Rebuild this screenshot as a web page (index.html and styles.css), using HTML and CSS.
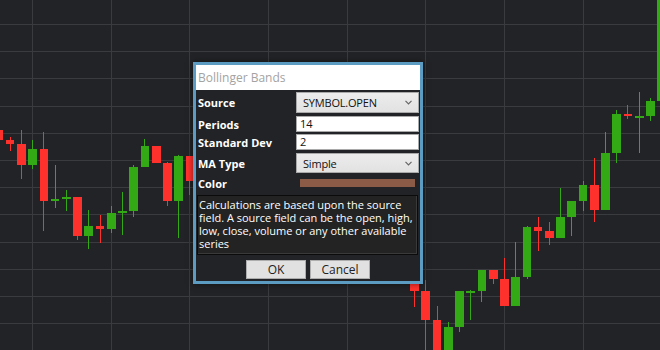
FILE: index.html
```html
<!DOCTYPE html>
<html lang="en">
<head>
    <meta charset="UTF-8">
    <meta name="viewport" content="width=device-width, initial-scale=1.0">
    <title>Bollinger Bands</title>
    <link rel="stylesheet" href="styles.css">
</head>
<body>
    <div class="chart">
        <svg class="chart-svg" width="660" height="350" viewBox="0 0 660 350">
            <g class="grid">
                <rect x="32" y="0" width="1" height="350"/>
                <rect x="111" y="0" width="1" height="350"/>
                <rect x="189" y="0" width="1" height="350"/>
                <rect x="268" y="0" width="1" height="350"/>
                <rect x="347" y="0" width="1" height="350"/>
                <rect x="425" y="0" width="1" height="350"/>
                <rect x="504" y="0" width="1" height="350"/>
                <rect x="583" y="0" width="1" height="350"/>
                <rect x="0" y="24" width="660" height="1"/>
                <rect x="0" y="51" width="660" height="1"/>
                <rect x="0" y="78" width="660" height="1"/>
                <rect x="0" y="106" width="660" height="1"/>
                <rect x="0" y="133" width="660" height="1"/>
                <rect x="0" y="160" width="660" height="1"/>
                <rect x="0" y="187" width="660" height="1"/>
                <rect x="0" y="214" width="660" height="1"/>
                <rect x="0" y="242" width="660" height="1"/>
                <rect x="0" y="269" width="660" height="1"/>
                <rect x="0" y="296" width="660" height="1"/>
                <rect x="0" y="323" width="660" height="1"/>
            </g>
            <!-- candles: wick first, body on top -->
            <g class="down">
                <rect x="-6" y="130" width="9" height="10"/>
                <rect x="10" y="137" width="1" height="14"/><rect x="6" y="140" width="8" height="4"/>
                <rect x="21" y="130" width="1" height="49"/><rect x="17" y="144" width="9" height="21"/>
                <rect x="43" y="132" width="1" height="99"/><rect x="40" y="149" width="8" height="52"/>
                <rect x="77" y="197" width="1" height="43"/><rect x="73" y="197" width="9" height="39"/>
                <rect x="100" y="215" width="1" height="28"/><rect x="96" y="226" width="8" height="3"/>
                <rect x="152" y="146" width="9" height="17"/>
                <rect x="167" y="162" width="1" height="44"/><rect x="163" y="163" width="9" height="38"/>
                <rect x="189" y="156" width="1" height="39"/><rect x="186" y="156" width="9" height="25"/>
                <rect x="414" y="270" width="1" height="37"/><rect x="410" y="270" width="9" height="21"/>
                <rect x="425" y="280" width="1" height="70"/><rect x="421" y="291" width="9" height="29"/>
                <rect x="437" y="306" width="1" height="44"/><rect x="433" y="320" width="8" height="30"/>
                <rect x="493" y="270" width="1" height="14"/><rect x="489" y="270" width="9" height="9"/>
                <rect x="504" y="258" width="1" height="48"/><rect x="500" y="279" width="9" height="27"/>
                <rect x="538" y="217" width="1" height="34"/><rect x="534" y="227" width="8" height="4"/>
                <rect x="549" y="222" width="1" height="23"/><rect x="545" y="231" width="9" height="7"/>
                <rect x="594" y="158" width="1" height="64"/><rect x="590" y="185" width="9" height="25"/>
                <rect x="627" y="105" width="1" height="14"/><rect x="624" y="114" width="8" height="2"/>
            </g>
            <g class="up">
                <rect x="32" y="140" width="1" height="29"/><rect x="28" y="149" width="9" height="16"/>
                <rect x="55" y="165" width="1" height="43"/><rect x="51" y="199" width="8" height="2"/>
                <rect x="66" y="190" width="1" height="21"/><rect x="62" y="197" width="9" height="2"/>
                <rect x="88" y="210" width="1" height="39"/><rect x="84" y="226" width="9" height="10"/>
                <rect x="111" y="206" width="1" height="27"/><rect x="107" y="213" width="9" height="16"/>
                <rect x="122" y="192" width="1" height="43"/><rect x="118" y="211" width="9" height="2"/>
                <rect x="133" y="165" width="1" height="52"/><rect x="129" y="167" width="9" height="44"/>
                <rect x="144" y="139" width="1" height="28"/><rect x="141" y="146" width="8" height="21"/>
                <rect x="178" y="155" width="1" height="83"/><rect x="174" y="156" width="9" height="45"/>
                <rect x="448" y="322" width="1" height="28"/><rect x="444" y="327" width="9" height="23"/>
                <rect x="459" y="291" width="1" height="41"/><rect x="455" y="291" width="9" height="36"/>
                <rect x="470" y="290" width="1" height="30"/><rect x="466" y="291" width="9" height="2"/>
                <rect x="481" y="270" width="1" height="32"/><rect x="478" y="270" width="8" height="21"/>
                <rect x="515" y="242" width="1" height="64"/><rect x="511" y="277" width="9" height="29"/>
                <rect x="527" y="226" width="1" height="53"/><rect x="523" y="227" width="8" height="50"/>
                <rect x="560" y="188" width="1" height="50"/><rect x="556" y="217" width="9" height="21"/>
                <rect x="571" y="201" width="1" height="35"/><rect x="567" y="201" width="9" height="16"/>
                <rect x="583" y="181" width="1" height="30"/><rect x="579" y="185" width="8" height="16"/>
                <rect x="605" y="132" width="1" height="78"/><rect x="601" y="153" width="9" height="57"/>
                <rect x="616" y="110" width="1" height="53"/><rect x="612" y="114" width="9" height="39"/>
                <rect x="639" y="92" width="1" height="61"/><rect x="635" y="116" width="9" height="2"/>
                <rect x="650" y="98" width="1" height="23"/><rect x="646" y="101" width="9" height="15"/>
                <rect x="657" y="0" width="9" height="101"/>
            </g>
        </svg>

        <div class="dialog">
            <div class="dialog-title">Bollinger Bands</div>
            <div class="dialog-body">
                <div class="field-row row-source">
                    <label>Source</label>
                    <div class="select">
                        <span>SYMBOL.OPEN</span>
                        <svg class="chevron" width="7" height="5" viewBox="0 0 7 5"><path d="M0.5 0.8 L3.5 3.8 L6.5 0.8" fill="none" stroke="#666" stroke-width="1.2"/></svg>
                    </div>
                </div>
                <div class="field-row row-periods">
                    <label>Periods</label>
                    <div class="input">14</div>
                </div>
                <div class="field-row row-dev">
                    <label>Standard Dev</label>
                    <div class="input">2</div>
                </div>
                <div class="field-row row-type">
                    <label>MA Type</label>
                    <div class="select">
                        <span>Simple</span>
                        <svg class="chevron" width="7" height="5" viewBox="0 0 7 5"><path d="M0.5 0.8 L3.5 3.8 L6.5 0.8" fill="none" stroke="#666" stroke-width="1.2"/></svg>
                    </div>
                </div>
                <div class="field-row row-color">
                    <label>Color</label>
                    <div class="color-swatch"></div>
                </div>
                <div class="description">
                    Calculations are based upon the source field. A source field can be the open, high, low, close, volume or any other available series
                </div>
                <div class="button-group">
                    <button class="button">OK</button>
                    <button class="button">Cancel</button>
                </div>
            </div>
        </div>
    </div>
</body>
</html>
```

FILE: styles.css
```css
* {
    margin: 0;
    padding: 0;
    box-sizing: border-box;
}
body {
    width: 660px;
    height: 350px;
    overflow: hidden;
    background-color: #222326;
    font-family: 'Open Sans', 'Liberation Sans', sans-serif;
}
.chart {
    position: relative;
    width: 660px;
    height: 350px;
}
.chart-svg {
    display: block;
}
.grid rect {
    fill: #3a3b3e;
}
.down rect {
    fill: #ff312c;
}
.up rect {
    fill: #33a915;
}
.dialog {
    position: absolute;
    left: 193px;
    top: 62px;
    width: 230px;
    height: 222px;
    border: 3px solid #5c9bc2;
    background: #222326;
    box-shadow: 0 0 6px rgba(0, 0, 0, 0.5);
    display: flex;
    flex-direction: column;
}
.dialog-title {
    height: 25px;
    background: #ffffff;
    color: #a3a3a3;
    font-size: 12px;
    line-height: 25px;
    padding-left: 2px;
}
.dialog-body {
    flex: 1;
    display: flex;
    flex-direction: column;
    padding: 2px 1px 0 1px;
}
.field-row {
    display: grid;
    grid-template-columns: 99px 123px;
    align-items: center;
}
.field-row label {
    color: #ffffff;
    font-size: 11px;
    font-weight: 700;
    padding-left: 1px;
}
.row-source {
    height: 21px;
}
.row-periods {
    height: 16px;
    margin-top: 3px;
}
.row-dev {
    height: 16px;
    margin-top: 2px;
}
.row-type {
    height: 20px;
    margin-top: 3px;
}
.row-color {
    height: 16px;
    margin-top: 2px;
}
.select {
    height: 100%;
    background: linear-gradient(#ececec, #e2e2e2);
    border: 1px solid #a9a9a9;
    display: flex;
    align-items: center;
    justify-content: space-between;
    padding: 0 6px 0 6px;
    color: #111;
    font-size: 11px;
    letter-spacing: -0.2px;
}
.input {
    height: 100%;
    background: #ffffff;
    border: 1px solid #a9a9a9;
    color: #111;
    font-size: 11px;
    line-height: 14px;
    padding-left: 3px;
}
.color-swatch {
    width: 115px;
    height: 8px;
    margin-left: 4px;
    background: #8c5b48;
}
.description {
    height: 60px;
    margin: 4px 1px 0 0;
    border: 1px solid #0b0b0b;
    box-shadow: inset -1px -1px 0 #3a3a3a;
    background: #232323;
    color: #ffffff;
    font-size: 11px;
    line-height: 13px;
    padding: 2px 1px;
}
.button-group {
    display: flex;
    justify-content: center;
    gap: 4px;
    margin-top: 5px;
}
.button {
    width: 60px;
    height: 19px;
    background: #e1e1e1;
    border: 1px solid #adadad;
    color: #222;
    font-family: 'Open Sans', 'Liberation Sans', sans-serif;
    font-size: 12px;
    line-height: 17px;
}
```
